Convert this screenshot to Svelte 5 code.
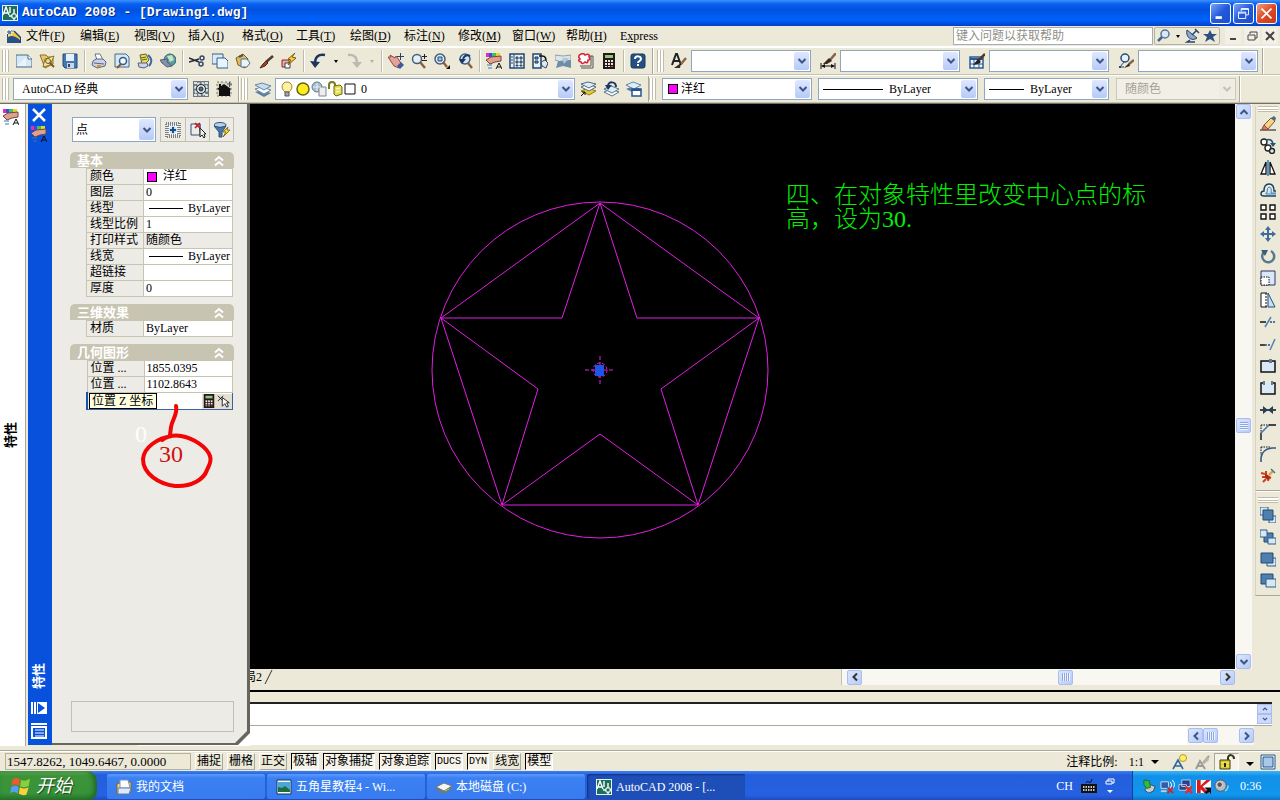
<script>
  const icons = {
    cad: '<path d="M0 0h16v16H0z" fill="#e8f4ee"/><path d="M1 1h14v14H1z" fill="#1c6f5c"/><path d="M1 10L4 2l3 8M2 8h4M8 2v6M12 4v11M7 11h8" stroke="#fff" stroke-width="1.4" fill="none"/><path d="M10 9h4v4h-4z" fill="#1c6f5c" stroke="#fff"/>',
    doc: '<path d="M2 2l8 1 6 6v6H2z" fill="#1e3f7c"/><path d="M4 3l5 1 6 6v3H2z" fill="#f7c936"/><path d="M2 10q5-5 13 2v3H2z" fill="#274f8c"/><path d="M0 4h9M4 0v8M1 1l6 6M7 1L1 7" stroke="#fff"/><path d="M3 3h3v3H3z" fill="#4b83c4"/>',
    newfile: '<path d="M0 2h12l4 4v8H0z" fill="#d5e8f5" stroke="#4d6c86"/><path d="M12 2v4h4" fill="#fff" stroke="#4d6c86"/><path d="M1 13l9-9v9z" fill="#fff" opacity=".5"/>',
    open: '<path d="M1 2h6l2 2h5v7l-8 4z" fill="#e7c56a" stroke="#8d722c"/><path d="M4 14l2-8 9-3-4 9z" fill="#fae9a5" stroke="#8d722c"/><path d="M10 9l5 5" stroke="#775919" stroke-width="2"/><circle cx="9" cy="8" r="2.5" fill="#e9dcae" stroke="#775919"/>',
    save: '<path d="M1 1h14v14H3l-2-2z" fill="#4676b3" stroke="#254878"/><path d="M4 1h8v7H4z" fill="#e5f0fa"/><path d="M5 10h7v5H5z" fill="#c5d6e8"/><path d="M6 11h2v3H6z" fill="#254878"/>',
    print: '<path d="M4 1h5l3 6H6z" fill="#fff" stroke="#65739a"/><path d="M2 8l3-2h7l3 3-1 4-8 2-5-3z" fill="#cbd2e7" stroke="#596588"/><path d="M3 10l10 1" stroke="#596588"/><path d="M6 13h4" stroke="#d99722" stroke-width="2"/>',
    preview: '<path d="M1 1h11l3 3v10H1z" fill="#d6e8f6" stroke="#456b91"/><circle cx="9" cy="8" r="3.5" fill="#f7fbff" stroke="#345a86" stroke-width="1.5"/><path d="M7 11l-4 4" stroke="#8a5530" stroke-width="2"/>',
    publish: '<path d="M3 2l6-1 3 6-4 4H5z" fill="#efd85a" stroke="#636327"/><path d="M1 10h9l1 3-4 2-5-1z" fill="#ccd4e8" stroke="#556083"/><path d="M4 5l5-1M5 7l5-1" stroke="#586429"/><path d="M11 2q6 5 1 11" stroke="#3c6ba5" stroke-width="2" fill="none"/>',
    dwf: '<circle cx="10" cy="7" r="6" fill="#5a9ca4" stroke="#385f78"/><path d="M7 3l5-1 2 5-4 2z" fill="#c9e5bc"/><path d="M0 7l8-1-1 3 5 4-5 1-5-4z" fill="#888fa8" stroke="#555f7c"/>',
    cut: '<path d="M0 5l10 4M0 9l10-3" stroke="#222b40" stroke-width="1.4"/><circle cx="13" cy="5" r="2" fill="none" stroke="#34486c" stroke-width="1.5"/><circle cx="12" cy="11" r="2" fill="none" stroke="#34486c" stroke-width="1.5"/>',
    copy: '<path d="M0 1h11v10H0z" fill="#dbeaf7" stroke="#375e85"/><path d="M5 5h8l3 3v7H5z" fill="#e8f4ff" stroke="#375e85"/>',
    paste: '<path d="M1 5l7-4 5 5-3 9-7-3z" fill="#dfbd5d" stroke="#785f29"/><path d="M6 6h6l3 4-3 4H6z" fill="#eaf3fa" stroke="#57718b"/><path d="M4 4l4-2" stroke="#555" stroke-width="2"/>',
    brush: '<path d="M15 3l-7 6" stroke="#513a2c" stroke-width="2.5"/><path d="M8 8l2 2-3 3-5 2 3-4z" fill="#a64122" stroke="#4c2519"/>',
    block: '<path d="M1 7h7v7H1z" fill="#f0a9a0" stroke="#8d2921"/><path d="M4 10h5v5H4z" fill="#fff" stroke="#345"/><path d="M14 0L7 6l3 1-3 5 8-7-4-1z" fill="#ffcf2e" stroke="#7a5a11"/>',
    undo: '<path d="M15 2C8 1 5 4 5 11" stroke="#1c355c" stroke-width="2.4" fill="none"/><path d="M0 8l10 1-5 6z" fill="#1c355c"/>',
    redo: '<path d="M2 2c7-1 9 3 9 9" stroke="#babab0" stroke-width="2.4" fill="none"/><path d="M6 9h10l-5 6z" fill="#babab0"/>',
    pan: '<path d="M0 4l3 0-1-2 5 3 1-2 3 4 3 5-3 3-5-2z" fill="#e6a199" stroke="#8b4843"/><path d="M9 13l4-4 3 3-4 4z" fill="#3a5c99"/><path d="M12.500 0v7M9 3.500h7" stroke="#27436c"/>',
    zoomrt: '<circle cx="6" cy="6" r="4.5" fill="#e3eff8" stroke="#455d7b" stroke-width="1.5"/><path d="M9 9l5 6" stroke="#8d5d3c" stroke-width="2.4"/><path d="M11 3.500h5M13.500 1v5M11 7.500h5" stroke="#222"/>',
    zoomwin: '<circle cx="6" cy="6" r="5" fill="#e3eff8" stroke="#455d7b" stroke-width="1.5"/><path d="M4 4h4v4H4z" fill="#8fc4ed" stroke="#244a75"/><path d="M9 9l4 5" stroke="#8d5d3c" stroke-width="2.4"/><path d="M16 12v4h-4z" fill="#111"/>',
    zoomprev: '<circle cx="8" cy="6" r="5" fill="#d2e5f3" stroke="#455d7b" stroke-width="1.5"/><path d="M11 10l4 5" stroke="#8d5d3c" stroke-width="2.4"/><path d="M13 3c-4-2-7 1-7 4" stroke="#1b3968" stroke-width="2" fill="none"/><path d="M2 6h7l-4 5z" fill="#1b3968"/>',
    props: '<path d="M0 0h3v4H0z" fill="#e929bd"/><path d="M3 0h3v4H3z" fill="#3b49e9"/><path d="M6 0h4v4H6z" fill="#42c05a"/><path d="M10 0h4v4h-4z" fill="#e9d32e"/><path d="M0 7l5-3 10-1v5l-6 1-5 2z" fill="#dfa090" stroke="#70453f"/><path d="M1 12h5M2 15h4" stroke="#3878ad"/><path d="M10 16l3-6 3 6M11 14h4" stroke="#111" fill="none"/>',
    center: '<path d="M1 1h14v14H1z" fill="#e7f1fa" stroke="#22466f" stroke-width="1.500"/><path d="M5 1v14" stroke="#22466f"/><path d="M7 4h2v2H7zM11 4h2v2h-2zM7 8h2v2H7zM11 8h2v2h-2zM7 12h2v1H7zM11 12h2v1h-2zM2 4h2M2 7h2M2 10h2" fill="#75a9d0" stroke="#345"/>',
    palette: '<path d="M1 1h8v14H1z" fill="#e7f1fa" stroke="#22466f" stroke-width="1.500"/><path d="M3 4h3v2H3zM3 8h3v2H3z" fill="#75a9d0" stroke="#234"/><path d="M7 3h3c4 0 4 3 4 6" fill="none" stroke="#111" stroke-width="1.500"/><path d="M9 9l4-2 3 3-2 5-4-2z" fill="#dce9f2" stroke="#345"/>',
    sheet: '<path d="M0 2l8 1 8-1v5l-7 3-9-3z" fill="#dce4e8" stroke="#8ba0ad"/><path d="M3 8l13-1v8l-8-2-7 2z" fill="#6b8fab"/><path d="M7 5h7l-5 6z" fill="#b8c7cf"/>',
    markup: '<path d="M8 3h7v12H3" fill="none" stroke="#555"/><path d="M13 3v10H2" fill="none" stroke="#555"/><path d="M3 1q3-1 4 1 5-2 4 2 2 3-1 3 0 4-3 2-3 3-4 0-4-1-1-3-3-3 1-5z" fill="#fff" stroke="#d6253a" stroke-width="1.600"/>',
    calc: '<path d="M2 0h12v16H2z" fill="#221a1a"/><path d="M4 2h8v3H4z" fill="#90c77a"/><path d="M4 7h2v2H4zM7 7h2v2H7zM10 7h2v2h-2zM4 10h2v2H4zM7 10h2v2H7zM10 10h2v2h-2zM4 13h2v1H4zM7 13h2v1H7z" fill="#f5dede"/><path d="M10 13h2v1h-2z" fill="#e33"/>',
    help: '<rect x="1" y="1" width="14" height="14" rx="2" fill="#235080" stroke="#173858"/><path d="M5 6c0-4 6-3 6 0 0 2-3 2-3 4" stroke="#fff" stroke-width="2" fill="none"/><path d="M7 11h2v2H7z" fill="#fff"/>',
    textstyle: '<path d="M1 12L5 1h1l4 11M3 8h5" stroke="#222" stroke-width="2" fill="none"/><path d="M15 5l-5 6" stroke="#8a6544" stroke-width="2.500"/><path d="M10 10l-1 5-6 0z" fill="#37291f"/>',
    dimstyle: '<path d="M16 0l-6 7" stroke="#8a6544" stroke-width="2.500"/><path d="M9 5l3 3-5 3-4 0z" fill="#37291f"/><path d="M1 10v6M15 10v6M2 13h12" stroke="#111"/><path d="M1 13l4-2v4zM15 13l-4-2v4z" fill="#111"/>',
    tablestyle: '<path d="M1 4h13v11H1z" fill="#edf5fb" stroke="#2d5c92" stroke-width="1.500"/><path d="M1 5h13v2H1z" fill="#2d5c92"/><path d="M1 11h13M5 6v9M10 6v9" stroke="#2d5c92"/><path d="M16 1L9 8" stroke="#513a2c" stroke-width="2.500"/><path d="M9 6l3 3-3 2-5 1z" fill="#222"/>',
    leader: '<circle cx="7" cy="5" r="4" fill="#e9f2fa" stroke="#254a75" stroke-width="1.500"/><path d="M6 9l-4 5h4" stroke="#254a75" fill="none"/><path d="M1 13h2v2H1z" fill="#254a75"/><path d="M16 7l-5 4" stroke="#8a6544" stroke-width="2.500"/><path d="M11 10l1 3-6 2z" fill="#37291f"/>',
    gear: '<path d="M0 0h16v16H0z" fill="#6d7880"/><path d="M1 1h3v2H1zM12 1h3v2h-3zM1 13h3v2H1zM12 13h3v2h-3z" fill="#dde2e4"/><circle cx="8" cy="8" r="6" fill="none" stroke="#dce4e8" stroke-width="2" stroke-dasharray="2.700 2"/><circle cx="8" cy="8" r="4.500" fill="#dce4e8" stroke="#222b33"/><circle cx="8" cy="8" r="2" fill="#5e6a72" stroke="#222b33"/>',
    home: '<path d="M1 1h14v14H1z" fill="#d9d5c5" stroke="#777" stroke-dasharray="2 2"/><path d="M1 8l7-5 7 5-1 1v6H3V9z" fill="#111"/><path d="M3 3h2v4H3z" fill="#111"/><path d="M11 3h5M13.500 1v5" stroke="#555"/>',
    layers: '<path d="M0 11l7-2 9 3-7 4z" fill="#5f7f9f"/><path d="M0 8l7-2 9 3-7 4z" fill="#fff" stroke="#6687a8"/><path d="M0 4l7-2 9 3-7 4z" fill="#c8dcec" stroke="#6687a8"/>',
    bulb: '<path d="M6 11C1 7 3 1 8 1s7 6 2 10z" fill="#fff1a2" stroke="#9b832c"/><path d="M6 11h4v4H6z" fill="#aaa" stroke="#555"/>',
    sun: '<circle cx="8" cy="8" r="6" fill="#ffec21" stroke="#626517" stroke-width="1.500"/>',
    vpfreeze: '<circle cx="6" cy="6" r="5" fill="#a7bfc9" stroke="#617d8a"/><path d="M8 6h7v9H8z" fill="#eee" stroke="#7b888f"/><path d="M6 2v8M2 6h8" stroke="#eef"/>',
    unlock: '<path d="M2 8V4c0-4 6-4 6 0v3" fill="none" stroke="#7c791f" stroke-width="2"/><path d="M7 5l6-1 2 2v7l-6 2-2-2z" fill="#e6df4c" stroke="#68671b"/><path d="M9 8l4-1M9 11l4-1" stroke="#fff"/>',
    square: '<path d="M2 3h10v10H2z" fill="#fff" stroke="#111"/>',
    laycur: '<path d="M1 10l7-3 8 3-7 4z" fill="#e6c92d" stroke="#8b7a20"/><path d="M1 6l7-3 8 3-7 4z" fill="#fff" stroke="#4e6b7f"/><path d="M1 3l7-2 8 2-7 4z" fill="#e1edf5" stroke="#4e6b7f"/><path d="M1 15l4-4M2 11h3v3" stroke="#111" fill="none"/>',
    layprev: '<path d="M1 11l7-3 8 3-7 4z" fill="#fff" stroke="#55758f"/><path d="M1 8l7-3 8 3-7 4z" fill="#e1edf5" stroke="#55758f"/><path d="M13 6c0-6-8-6-8-1" fill="none" stroke="#1c3965" stroke-width="2"/><path d="M2 4h7l-4 5z" fill="#1c3965"/>',
    laystate: '<path d="M0 8l7-3 8 3-7 4z" fill="#5f7f9f"/><path d="M0 4l7-3 8 3-7 4z" fill="#e1edf5" stroke="#6687a8"/><path d="M6 8h9v7H6z" fill="#fff" stroke="#275492" stroke-width="1.500"/><path d="M6 8h9v2H6z" fill="#275492"/>',
    search: '<circle cx="9" cy="6" r="4" fill="#d7e8f8" stroke="#5b7396" stroke-width="1.500"/><path d="M6 9l-4 4" stroke="#43618b" stroke-width="2.500"/>',
    dish: '<path d="M3 2l10 8c-5 4-12-1-10-8z" fill="#8daac8" stroke="#274570"/><path d="M6 12l-3 2h8M8 7l4-4M11 1l4 4" stroke="#274570" stroke-width="1.500" fill="none"/>',
    star: '<path d="M8 2l2 4h5l-4 3 2 5-5-3-5 3 2-5-4-3h5z" fill="#2d4f80"/>',
    quicksel: '<path d="M1 1h14v14H1z" fill="none" stroke="#111" stroke-dasharray="1 1"/><path d="M3 3h10v10H3z" fill="#fff" stroke="#111" stroke-dasharray="1 1"/><circle cx="8" cy="8" r="4" fill="#cce3f7"/><path d="M8 5v6M5 8h6" stroke="#174b8b" stroke-width="2"/>',
    selobj: '<path d="M1 2h9v11H1zM10 2v7" fill="none" stroke="#30507a"/><path d="M5 1l5 5M10 1L5 6" stroke="#c01820" stroke-width="1.500"/><path d="M10 6v9l2-2 2 3 1-1-1-3h2z" fill="#e4f2e8" stroke="#222"/>',
    filter: '<ellipse cx="6" cy="3" rx="6" ry="2.500" fill="#b8d0e8" stroke="#31527d"/><path d="M0 4l5 6v5h3v-5l4-6q-6 3-12 0z" fill="#4a76a6" stroke="#31527d"/><path d="M14 5l-5 5 3 0-3 5 7-7h-3z" fill="#ffd73b" stroke="#8f7518"/>',
    pick: '<path d="M1 2l6 6M7 2L1 8" stroke="#111"/><path d="M6 4v10l3-3 2 4 2-1-2-4h3z" fill="#fff" stroke="#111"/>',
    erase: '<path d="M0 14h16" stroke="#111"/><path d="M4 9l7-7 4 3-7 8z" fill="#f5d489" stroke="#76572c"/><path d="M4 9l4 4-2 1-4-1z" fill="#e5766d" stroke="#8c4a44"/><path d="M11 2l4 3 1-3-2-2z" fill="#456b8c"/>',
    copyobj: '<circle cx="4" cy="4" r="3" fill="#fff" stroke="#222" stroke-width="1.400"/><circle cx="8" cy="10" r="3" fill="#fff" stroke="#222" stroke-width="1.400"/><circle cx="12" cy="13" r="2.500" fill="#dce8f2" stroke="#222" stroke-width="1.400"/><path d="M6 2q6-2 7 4" stroke="#1f5280" stroke-width="1.600" fill="none"/><path d="M10 5h6l-3 4z" fill="#1f5280"/>',
    mirror: '<path d="M6 2v12H1zM10 2v12h5z" fill="#fff" stroke="#111" stroke-width="1.300"/><path d="M8 0v16" stroke="#267bb9" stroke-width="1.500"/>',
    offset: '<path d="M16 14H4q-3 0-3-2 0-3 3-3 0-7 5-7t5 7h2" fill="none" stroke="#1d3f60" stroke-width="1.400"/><path d="M16 12H6q-1-1 1-1 0-6 2-6 3 0 2 6h5" fill="#d5eaf8" stroke="#3a83bb"/>',
    array: '<path d="M1 1h5v5H1zM10 1h5v5h-5zM1 10h5v5H1zM10 10h5v5h-5z" fill="#fff" stroke="#111" stroke-width="1.400"/>',
    move: '<path d="M8 0l3 4H9v3h3V5l4 3-4 3V9H9v3h2l-3 4-3-4h2V9H4v2L0 8l4-3v2h3V4H5z" fill="#3f6c9b"/>',
    rotate: '<path d="M11 3a6 6 0 1 1-7 1" stroke="#58788e" stroke-width="2.500" fill="none"/><path d="M1 2h7L5 8z" fill="#365e7e"/>',
    scale: '<path d="M1 1h14v14H1z" fill="#d7e8f9" stroke="#336"/><path d="M1 7h8v8H1z" fill="#fff" stroke="#111" stroke-dasharray="1.500 1"/>',
    stretch: '<path d="M7 1H1v14h6" fill="#fff" stroke="#111"/><path d="M6 1v14" stroke="#111" stroke-dasharray="2 1"/><path d="M8 1l7 14H8z" fill="#c8dff2" stroke="#234f7b"/>',
    trim: '<path d="M0 8h6" stroke="#111" stroke-width="1.500"/><path d="M10 8h6" stroke="#234f7b" stroke-width="1.500" stroke-dasharray="2 1"/><path d="M5 13l6-10" stroke="#4c85b5" stroke-width="1.500"/>',
    extend: '<path d="M0 9h5" stroke="#111" stroke-width="1.500"/><path d="M5 9h6" stroke="#234f7b" stroke-width="1.500" stroke-dasharray="2 1"/><path d="M10 14l5-11" stroke="#4c85b5" stroke-width="1.500"/>',
    breakpt: '<path d="M1 3h14v11H1z" fill="#dbe9f6" stroke="#111" stroke-width="1.500"/><path d="M9 1h3v4H9z" fill="#5c7c9c"/>',
    breakln: '<path d="M4 3H1v11h14V3h-3" fill="#dbe9f6" stroke="#111" stroke-width="1.500"/><path d="M3 1h2v4H3zM11 1h2v4h-2z" fill="#5c7c9c"/>',
    join: '<path d="M0 8h16" stroke="#111" stroke-width="1.500"/><path d="M3 4l5 4-5 4zM13 4L8 8l5 4z" fill="#243f59"/>',
    chamfer: '<path d="M1 1h10M1 1v8" stroke="#111" stroke-dasharray="1.500 1"/><path d="M1 16V9M9 1h7" stroke="#111" stroke-width="1.400"/><path d="M1 9l8-8" stroke="#3d79b3" stroke-width="1.600"/>',
    fillet: '<path d="M1 1h10M1 1v8" stroke="#111" stroke-dasharray="1.500 1"/><path d="M1 16v-4Q2 3 12 2h4" stroke="#315b86" stroke-width="1.600" fill="none"/>',
    explode: '<path d="M1 5l4 1M6 3v4M2 9l3 0M3 14l3-3M8 13l1-3M11 10l-2-1" stroke="#cf3f22" stroke-width="2"/><path d="M5 6l3 1 2 2-2 3-3-2z" fill="#a82d18"/><path d="M9 7l4-4" stroke="#dbab37" stroke-width="2.500"/><path d="M11 1l4 4" stroke="#4a7199" stroke-width="1.500"/>',
    front: '<path d="M0 0h8v8H0zM9 9h7v7H9z" fill="#d7e8f5" stroke="#315b86"/><path d="M3 3h10v10H3z" fill="#4d80ae" stroke="#254b73"/>',
    back: '<path d="M4 4h9v9H4z" fill="#4d80ae" stroke="#254b73"/><path d="M0 1h7v7H0zM8 9h8v6H8z" fill="#d7e8f5" stroke="#315b86"/>',
    above: '<path d="M7 7h9v8H7z" fill="#d7e8f5" stroke="#315b86"/><path d="M1 2h12v10H1z" fill="#4d80ae" stroke="#254b73"/>',
    under: '<path d="M1 1h12v10H1z" fill="#4d80ae" stroke="#254b73"/><path d="M6 6h10v8H6z" fill="#d7e8f5" stroke="#315b86"/>',
    autohide: '<path d="M1 2v12M4 2v12" stroke="#fff" stroke-width="2"/><path d="M6 2h10v12H6z" fill="#fff"/><path d="M7 3l7 5-7 5z" fill="#0851dc"/>',
    menu: '<path d="M0 1h16" stroke="#fff" stroke-width="2"/><path d="M1 4h14v11H1z" fill="#0851dc" stroke="#fff" stroke-width="2"/><path d="M4 7h9M4 10h9M4 13h9" stroke="#fff"/>',
    folder: '<path d="M1 5l5-2h9v10l-4 2H1z" fill="#f6d777" stroke="#806626"/><path d="M4 1h8l2 8H4z" fill="#fff" stroke="#719abd"/><path d="M2 9h13l-2 6H2z" fill="#dce9ff" stroke="#6482ad"/>',
    picture: '<path d="M1 1h14v14H1z" fill="#f5fbff" stroke="#13385c"/><path d="M2 3h12v10H2z" fill="#4aa7da"/><path d="M2 13V8l4 1 3-2 5 4v2z" fill="#1e6d3a"/>',
    disk: '<path d="M0 8l8-4 8 3-8 5z" fill="#f6f6f6" stroke="#777"/><path d="M0 8l8 4 8-5v3l-8 5-8-4z" fill="#727880"/><path d="M9 12l4-2" stroke="#7be36a"/>',
    annoauto: '<path d="M1 15l5-9 5 9M3 12h7" stroke="#31669a" stroke-width="1.600" fill="none"/><circle cx="11" cy="4" r="3.500" fill="#fff06b" stroke="#b59a23"/>',
    annogrey: '<path d="M1 15l4-8 5 8M3 12h6M8 9l6-7" stroke="#9d9d98" stroke-width="2" fill="none"/><path d="M8 7l5-4 1 3-5 4z" fill="#b5b5b0"/>',
    lock: '<path d="M9 7V4c0-4 6-4 6 1" fill="none" stroke="#333214" stroke-width="2"/><path d="M1 6h10v9H1z" fill="#d9cc25" stroke="#423f0e"/><path d="M2 9h8M2 12h8" stroke="#fff37a"/><path d="M5 9h2v4H5z" fill="#222"/>',
    clean: '<path d="M1 1h14v14H1z" fill="#f4f9ff" stroke="#25568b"/><path d="M3 3h10v10H3z" fill="#a8c8e8" stroke="#25568b"/>',
    keyboard: '<path d="M5 5q1-3 3-1t3-3" stroke="#111" fill="none"/><path d="M0 6h16v9H0z" fill="#111"/><path d="M2 9h12M2 12h12" stroke="#fff" stroke-width="1.500" stroke-dasharray="1.500 1"/>',
    safely: '<path d="M5 8l4-2 5 2-2 5-5 2-4-3z" fill="#c5ccd2" stroke="#3d4d56"/><path d="M2 1l6 1 1 7-4 1-3-4z" fill="#35b742" stroke="#1b6f2c"/>',
    wifi: '<path d="M1 3h8v7H1z" fill="#285db0" stroke="#ddd"/><path d="M11 3q3 3 0 7M13 1q5 5 0 10" stroke="#fff" fill="none"/><path d="M8 9l6 6M14 9l-6 6" stroke="#d82222" stroke-width="2"/><path d="M1 13h6" stroke="#ccc" stroke-width="2"/>',
    lan: '<path d="M4 1h9v7H4zM1 6h8v6H1z" fill="#23458f" stroke="#c7cce0"/><path d="M8 8l7 7M15 8l-7 7" stroke="#e52b2b" stroke-width="2.500"/>',
    shield: '<path d="M0 1h16v14H0z" fill="#fff"/><path d="M1 1h4v6l6-6h5L7 8l7 7H9L5 11v4H1z" fill="#d91c1c"/><path d="M9 9h7v7l-2-2-3 2-2-2 3-2z" fill="#111"/>',
    volume: '<circle cx="7" cy="7" r="6" fill="#b9bdc2" stroke="#555b64"/><circle cx="6" cy="6" r="3" fill="#51565e" stroke="#eee"/><path d="M12 13q3-2 3-6" stroke="#8cd0ff" stroke-width="1.500" fill="none"/>',
    flag: '<path d="M2 3q3-3 6 0L7 8Q4 5 1 8z" fill="#f0592b"/><path d="M9 3q3 2 7-1l-1 6q-4 2-7 0z" fill="#8bd03c"/><path d="M1 9q3-3 6 0l-1 5q-3-3-6 0z" fill="#5b9df5"/><path d="M8 9q3 2 7 0l-2 6q-3 1-6-1z" fill="#fdd13a"/>'
  }

  const menus = [
    ['文件', 'F'], ['编辑', 'E'], ['视图', 'V'], ['插入', 'I'], ['格式', 'O'], ['工具', 'T'],
    ['绘图', 'D'], ['标注', 'N'], ['修改', 'M'], ['窗口', 'W'], ['帮助', 'H']
  ]

  const standard = [
    'newfile', 'open', 'save', '|', 'print', 'preview', 'publish', 'dwf', '|',
    'cut', 'copy', 'paste', 'brush', 'block', '|', 'undo', 'v', 'redo', 'voff', '|',
    'pan', 'zoomrt', 'zoomwin', 'zoomprev', '|',
    'props', 'center', 'palette', 'sheet', 'markup', 'calc', '|', 'help'
  ]

  const styles = [
    { icon: 'textstyle', label: '文字样式' },
    { icon: 'dimstyle', label: '标注样式' },
    { icon: 'tablestyle', label: '表格样式' },
    { icon: 'leader', label: '多重引线样式' }
  ]

  const modify = [
    'erase', 'copyobj', 'mirror', 'offset', 'array', 'move', 'rotate', 'scale', 'stretch',
    'trim', 'extend', 'breakpt', 'breakln', 'join', 'chamfer', 'fillet', 'explode'
  ]
  const order = ['front', 'back', 'above', 'under']

  const groups = [
    {
      title: '基本',
      rows: [
        { label: '颜色', value: '洋红', kind: 'color' },
        { label: '图层', value: '0' },
        { label: '线型', value: 'ByLayer', kind: 'line' },
        { label: '线型比例', value: '1' },
        { label: '打印样式', value: '随颜色', kind: 'readonly' },
        { label: '线宽', value: 'ByLayer', kind: 'line' },
        { label: '超链接', value: '' },
        { label: '厚度', value: '0' }
      ]
    },
    { title: '三维效果', rows: [{ label: '材质', value: 'ByLayer' }] },
    {
      title: '几何图形',
      rows: [
        { label: '位置 ...', value: '1855.0395' },
        { label: '位置 ...', value: '1102.8643' },
        { label: '位置 Z 坐标', value: '', kind: 'active' }
      ]
    }
  ]

  let toggles = $state([
    { label: '捕捉', on: false },
    { label: '栅格', on: false },
    { label: '正交', on: false },
    { label: '极轴', on: true },
    { label: '对象捕捉', on: true },
    { label: '对象追踪', on: true },
    { label: 'DUCS', on: true, narrow: true },
    { label: 'DYN', on: true, narrow: true },
    { label: '线宽', on: false },
    { label: '模型', on: true }
  ])

  const tasks = [
    { icon: 'folder', label: '我的文档' },
    { icon: 'picture', label: '五角星教程4 - Wi...' },
    { icon: 'disk', label: '本地磁盘 (C:)' },
    { icon: 'cad', label: 'AutoCAD 2008 - [...', active: true }
  ]

  const tray = ['safely', 'wifi', 'lan', 'shield', 'volume']
</script>

{#snippet icon(name)}
  <svg class="icon" viewBox="0 0 16 16" aria-hidden="true">{@html icons[name]}</svg>
{/snippet}

{#snippet tool(name)}
  <button class="tool" aria-label={name}>{@render icon(name)}</button>
{/snippet}

{#snippet chevron(dir)}
  <svg class="chevron chevron--{dir}" viewBox="0 0 10 10" aria-hidden="true"><path d="M1.500 3L5 6.500 8.500 3" /></svg>
{/snippet}

{#snippet combo(label, value, cls, kind)}
  <span class="combo {cls}" class:combo--off={kind === 'off'}>
    <select class="combo__select combo__select--{kind}" aria-label={label} disabled={kind === 'off'}>
      <option>{value}</option>
    </select>
    {#if kind === 'color'}<i class="swatch"></i>{/if}
    {#if kind === 'line'}<i class="combo__line"></i>{/if}
    {#if kind === 'layer'}
      <span class="combo__layer">
        {#each ['bulb', 'sun', 'vpfreeze', 'unlock', 'square'] as name}{@render icon(name)}{/each}
      </span>
    {/if}
    <span class="combo__arrow">{@render chevron('down')}</span>
  </span>
{/snippet}

<div class="desktop">
  <header class="title">
    {@render icon('cad')}
    <h1>AutoCAD 2008 - [Drawing1.dwg]</h1>
    <button class="title__btn" aria-label="最小化"><svg viewBox="0 0 21 21"><path d="M5 15h7" stroke-width="3" /></svg></button>
    <button class="title__btn" aria-label="还原"><svg viewBox="0 0 21 21"><path d="M8 8V5h8v7h-3M5 9h8v7H5zM5 10h8M8 6h8" /></svg></button>
    <button class="title__btn title__btn--close" aria-label="关闭"><svg viewBox="0 0 21 21"><path d="M5 5l11 11M16 5L5 16" stroke-width="2" /></svg></button>
  </header>

  <nav class="menu">
    {@render icon('doc')}
    {#each menus as [name, key]}
      <button class="menu__item">{name}(<u>{key}</u>)</button>
    {/each}
    <button class="menu__item">E<u>x</u>press</button>
    <input class="menu__search" aria-label="帮助" placeholder="键入问题以获取帮助" />
    <div class="menu__tools">
      {@render tool('search')}
      <span class="caret"></span>
      {@render tool('dish')}
      {@render tool('star')}
    </div>
    <div class="menu__window">
      <button aria-label="最小化文档"><svg viewBox="0 0 12 12"><path d="M3 9h6" stroke-width="2" /></svg></button>
      <button aria-label="还原文档"><svg viewBox="0 0 12 12"><path d="M4 4V2h7v6H9M2 5h7v5H2z" /></svg></button>
      <button aria-label="关闭文档"><svg viewBox="0 0 12 12"><path d="M2 2l8 8M10 2l-8 8" stroke-width="2" /></svg></button>
    </div>
  </nav>

  <div class="bars bars--top">
    <div class="bar">
      <i class="grip"></i>
      {#each standard as name}
        {#if name === '|'}
          <i class="sep"></i>
        {:else if name === 'v' || name === 'voff'}
          <button class="drop" aria-label="更多"><span class="caret" class:caret--off={name === 'voff'}></span></button>
        {:else}
          {@render tool(name)}
        {/if}
      {/each}
    </div>
    <div class="bar bar--styles">
      <i class="grip"></i>
      {#each styles as s}
        <div class="style">
          {@render icon(s.icon)}
          {@render combo(s.label, '', 'combo--style', 'plain')}
        </div>
      {/each}
    </div>
  </div>

  <div class="bars">
    <div class="bar">
      <i class="grip"></i>
      {@render combo('工作空间', 'AutoCAD 经典', 'combo--space', 'plain')}
      {@render tool('gear')}
      {@render tool('home')}
    </div>
    <div class="bar">
      <i class="grip"></i>
      {@render tool('layers')}
      {@render combo('图层', '0', 'combo--layers', 'layer')}
      {@render tool('laycur')}
      {@render tool('layprev')}
      {@render tool('laystate')}
    </div>
    <div class="bar bar--props">
      <i class="grip"></i>
      {@render combo('颜色', '洋红', 'combo--color', 'color')}
      {@render combo('线型', 'ByLayer', 'combo--ltype', 'line')}
      {@render combo('线宽', 'ByLayer', 'combo--lweight', 'line')}
      {@render combo('打印样式', '随颜色', 'combo--style', 'off')}
    </div>
  </div>

  <main class="body">
    <aside class="dock">
      {@render icon('props')}
      <span class="upright">特性</span>
    </aside>

    <section class="palette">
      <div class="palette__bar">
        <button aria-label="关闭特性"><svg class="icon" viewBox="0 0 16 16"><path d="M2 2l12 12M14 2L2 14" stroke="#fff" stroke-width="2.500" /></svg></button>
        {@render icon('props')}
        <span class="upright">特性</span>
        <button aria-label="自动隐藏">{@render icon('autohide')}</button>
        <button aria-label="特性菜单">{@render icon('menu')}</button>
      </div>
      <div class="palette__edge">
        <div class="palette__body">
          <div class="palette__top">
            {@render combo('对象', '点', 'combo--object', 'plain')}
            <div class="palette__tools">
              {@render tool('quicksel')}
              {@render tool('selobj')}
              {@render tool('filter')}
            </div>
          </div>

          {#each groups as group}
            <div class="group">
              <h2>
                {group.title}
                <svg viewBox="0 0 10 12"><path d="M1 5.500L5 2l4 3.500M1 10.500L5 7l4 3.500" /></svg>
              </h2>
              <table>
                <tbody>
                  {#each group.rows as row}
                    <tr class:active={row.kind === 'active'}>
                      <th scope="row"><span class:tip={row.kind === 'active'}>{row.label}</span></th>
                      <td class:readonly={row.kind === 'readonly'}>
                        <div class="cell">
                          {#if row.kind === 'color'}<i class="swatch"></i>{/if}
                          {#if row.kind === 'line'}<i class="cell__line"></i>{/if}
                          {#if row.kind}
                            <span>{row.value}</span>
                          {:else}
                            <input aria-label={row.label} value={row.value} />
                          {/if}
                          {#if row.kind === 'active'}
                            <button class="cell__btn" aria-label="计算器">{@render icon('calc')}</button>
                            <button class="cell__btn" aria-label="拾取点">{@render icon('pick')}</button>
                          {/if}
                        </div>
                      </td>
                    </tr>
                  {/each}
                </tbody>
              </table>
            </div>
          {/each}

          <div class="palette__hint"></div>
        </div>
      </div>

      <svg class="note" width="90" height="110" viewBox="130 385 90 110">
        <text x="135" y="442" fill="#fff">0</text>
        <path d="M176 406c2 8-4 14-5 21l-1 8" />
        <path d="M172 436c-14 2-28 11-29 23 0 15 16 25 32 27 17 1 29-7 32-16 2-5 5-8 3-14-3-9-17-18-29-20-6-1-13 0-19 4" />
        <text x="159" y="462" fill="#d01010">30</text>
      </svg>
    </section>

    <div class="work">
      <div class="work__top">
        <div class="view">
          <div class="view__row">
            <div class="canvas">
              <svg width="985" height="565" viewBox="250 104 985 565">
                <g class="canvas__lines">
                  <circle cx="600" cy="370" r="168" />
                  <path d="M600 203L759 318 698 505H502L441 318z" />
                  <path d="M600 203L637 318H759L661 389 698 505 600 434 502 505 538 389 441 318H562z" />
                  <path d="M585 370h30M600 356v30" stroke-dasharray="4 2" />
                  <circle cx="600" cy="370" r="7" stroke-dasharray="3 2" />
                </g>
                <path d="M595 365h9v11h-9z" fill="#1c55e8" />
                <text x="786" y="203">四、在对象特性里改变中心点的标</text>
                <text x="786" y="227">高，设为30.</text>
              </svg>
            </div>
            <div class="scroll scroll--v">
              <button aria-label="向上">{@render chevron('up')}</button>
              <i class="before"></i>
              <span class="thumb"></span>
              <i class="after"></i>
              <button aria-label="向下">{@render chevron('down')}</button>
            </div>
          </div>
          <div class="tabs">
            <a class="tabs__tab" href="#layout2">局2</a>
            <svg width="12" height="16" viewBox="0 0 12 16"><path d="M3 15L10 1" /></svg>
            <div class="scroll scroll--h">
              <button aria-label="向左">{@render chevron('left')}</button>
              <i class="before"></i>
              <span class="thumb"></span>
              <i class="after"></i>
              <button aria-label="向右">{@render chevron('right')}</button>
            </div>
          </div>
        </div>
        <div class="side">
          <div class="side__bar">
            <i class="grip grip--h"></i>
            {#each modify as name}{@render tool(name)}{/each}
          </div>
          <div class="side__bar">
            <i class="grip grip--h"></i>
            {#each order as name}{@render tool(name)}{/each}
          </div>
        </div>
      </div>

      <div class="command">
        <div class="command__log">
          <div class="command__spin">
            <button aria-label="上一行">{@render chevron('up')}</button>
            <button aria-label="下一行">{@render chevron('down')}</button>
          </div>
        </div>
        <div class="command__line">
          <input aria-label="命令" />
          <div class="scroll scroll--h scroll--cmd">
            <button aria-label="向左">{@render chevron('left')}</button>
            <span class="thumb"></span>
            <i class="after"></i>
            <button aria-label="向右">{@render chevron('right')}</button>
          </div>
        </div>
      </div>
    </div>
  </main>

  <footer class="status">
    <output class="status__pos">1547.8262, 1049.6467, 0.0000</output>
    {#each toggles as t}
      <button class="toggle" class:toggle--on={t.on} class:toggle--narrow={t.narrow} onclick={() => (t.on = !t.on)}>{t.label}</button>
    {/each}
    <span class="status__label">注释比例:</span>
    <button class="status__scale">1:1 <span class="caret caret--big"></span></button>
    {@render tool('annoauto')}
    {@render tool('annogrey')}
    <span class="status__lock">{@render tool('lock')}</span>
    <button class="status__more" aria-label="状态栏菜单"><span class="caret caret--big"></span></button>
    {@render icon('clean')}
  </footer>

  <div class="taskbar">
    <button class="start">{@render icon('flag')}<span>开始</span></button>
    <div class="taskbar__list">
      {#each tasks as task}
        <button class="task" class:task--active={task.active}>{@render icon(task.icon)}<span>{task.label}</span></button>
      {/each}
    </div>
    <div class="lang">
      <span>CH</span>
      {@render icon('keyboard')}
      <svg width="10" height="16" viewBox="0 0 10 16"><path d="M3 3V1h6v4H7M1 3h6v3H1z" fill="none" stroke="#fff" /><path d="M2 12h6l-3 3z" fill="#fff" /></svg>
    </div>
    <div class="tray">
      {#each tray as name}{@render icon(name)}{/each}
      <time>0:36</time>
    </div>
  </div>
</div>

<style>
  :global(body) {
    background: #ece9d8;
  }

  .desktop {
    display: flex;
    flex-direction: column;
    min-height: 100vh;
    overflow: hidden;
    background: #ece9d8;
    color: #000;
    font: 12px/16px 'Liberation Serif', 'Noto Sans CJK SC', serif;
  }

  .desktop * {
    box-sizing: border-box;
  }

  button,
  input,
  select {
    margin: 0;
    padding: 0;
    border: 0;
    border-radius: 0;
    background: none;
    color: inherit;
    font: inherit;
  }

  .icon {
    flex: none;
    display: block;
    width: 16px;
    height: 16px;
  }

  .tool {
    flex: none;
    display: flex;
    align-items: center;
    justify-content: center;
    width: 23px;
    height: 22px;
  }

  .caret {
    display: inline-block;
    border: 2px solid transparent;
    border-top: 3px solid #000;
    border-bottom: 0;
  }

  .caret--off {
    border-top-color: #b5b2a4;
  }

  .caret--big {
    border-width: 4px 4px 0;
  }

  .chevron {
    width: 10px;
    height: 10px;
    fill: none;
    stroke: #3c5584;
    stroke-width: 2;
  }

  .chevron--up {
    transform: rotate(180deg);
  }

  .chevron--left {
    transform: rotate(90deg);
  }

  .chevron--right {
    transform: rotate(-90deg);
  }

  .swatch {
    flex: none;
    width: 10px;
    height: 10px;
    border: 1px solid #000;
    background: #f0f;
  }

  .upright {
    writing-mode: vertical-rl;
    text-orientation: sideways;
    transform: rotate(180deg);
    font-weight: bold;
    font-size: 13px;
  }

  /* title bar */
  .title {
    display: flex;
    align-items: center;
    gap: 2px;
    height: 26px;
    padding: 0 3px 0 2px;
    background: linear-gradient(#3a93ff 0, #0a5fee 4px, #0053e1 10px, #0062fb 20px, #0040c8 26px);
  }

  .title h1 {
    flex: 1;
    margin: 0 0 0 2px;
    color: #fff;
    font: bold 13px/26px 'Liberation Mono', monospace;
    text-shadow: 1px 1px 0 #0a2a80;
  }

  .title__btn {
    width: 21px;
    height: 21px;
    border: 1px solid #fff;
    border-radius: 3px;
    background: linear-gradient(135deg, #7ba4f5, #2459dd 50%, #1c4ecb);
  }

  .title__btn--close {
    background: linear-gradient(135deg, #f0a084, #dd4a25 50%, #c43a17);
  }

  .title__btn svg {
    display: block;
    fill: none;
    stroke: #fff;
  }

  /* menu bar */
  .menu {
    display: flex;
    align-items: center;
    height: 20px;
    padding-left: 5px;
  }

  .menu__item {
    min-width: 54px;
    padding-left: 5px;
    line-height: 18px;
    text-align: left;
  }

  .menu__search {
    width: 200px;
    height: 18px;
    margin-left: auto;
    padding: 0 2px;
    border: 1px solid #a5acb2;
    background: #fff;
  }

  .menu__search::placeholder {
    color: #8f8f88;
    opacity: 1;
  }

  .menu__tools {
    display: flex;
    align-items: center;
    height: 18px;
    width: 66px;
    margin-left: 1px;
    border: 1px solid #b5b19d;
    border-radius: 2px;
  }

  .menu__tools .tool {
    width: 18px;
  }

  .menu__tools .caret {
    margin: 0 3px;
  }

  .menu__window {
    display: flex;
    justify-content: space-between;
    width: 53px;
    margin: 0 2px 0 5px;
  }

  .menu__window button {
    width: 16px;
    height: 16px;
    padding: 2px;
    background: #f2f0e6;
  }

  .menu__window svg {
    display: block;
    fill: none;
    stroke: #444;
  }

  /* toolbars */
  .bars {
    display: flex;
    height: 28px;
    border-top: 1px solid #fff;
    border-bottom: 1px solid #c6c2b0;
  }

  .bars--top {
    height: 29px;
    border-top-width: 2px;
  }

  .bar {
    display: flex;
    align-items: center;
    padding: 0 3px 0 2px;
    border-right: 1px solid #aca899;
    box-shadow: 1px 0 0 #fff;
  }

  .bar--props {
    gap: 6px;
    padding-left: 0;
  }

  .bar--styles {
    padding-left: 4px;
  }

  .grip {
    flex: none;
    display: block;
    width: 7px;
    height: 22px;
    margin-right: 3px;
    border: solid #c0bca9;
    border-width: 0 1px;
    background: linear-gradient(90deg, #fff 2px, #c0bca9 2px 3px, #fff 3px);
  }

  .bar--props .grip {
    margin-right: 0;
  }

  .grip--h {
    width: 20px;
    height: 6px;
    margin: 2px 0 1px 2px;
    border-width: 1px 0;
    background: linear-gradient(#fff 2px, #c0bca9 2px 3px, #fff 3px);
  }

  .sep {
    width: 6px;
    height: 22px;
    border-left: 3px solid transparent;
    background: linear-gradient(90deg, #c0bca9 1px, #fff 1px 2px, transparent 2px);
    background-clip: padding-box;
  }

  .drop {
    display: flex;
    align-items: center;
    justify-content: center;
    width: 13px;
    height: 22px;
  }

  .style {
    display: flex;
    align-items: center;
    gap: 4px;
    margin-left: 4px;
    padding-right: 1px;
  }

  .style + .style {
    padding-left: 4px;
  }

  .combo {
    flex: none;
    display: grid;
    align-items: center;
    height: 22px;
    border: 1px solid #8fa6bf;
    background: #fff;
  }

  .combo > * {
    grid-area: 1 / 1;
  }

  .combo--style { width: 120px; }
  .combo--space { width: 175px; margin: 0 1px; }
  .combo--layers { width: 300px; margin: 0 1px; }
  .combo--color { width: 150px; }
  .combo--ltype { width: 160px; }
  .combo--lweight { width: 125px; margin-right: 1px; }
  .combo--object { width: 84px; height: 25px; }

  .combo__select {
    appearance: none;
    width: 100%;
    height: 20px;
    padding-left: 8px;
    outline: none;
  }

  .combo--object .combo__select {
    padding-left: 3px;
  }

  .combo__select--color {
    padding-left: 18px;
  }

  .combo .swatch {
    margin-left: 5px;
  }

  .combo__select--layer {
    padding-left: 85px;
  }

  .combo__select--line {
    padding-right: 46px;
    text-align: right;
    text-align-last: right;
  }

  .combo--lweight .combo__select--line {
    padding-right: 36px;
  }

  .combo__line {
    width: 60px;
    margin-left: 4px;
    border-top: 1px solid #000;
  }

  .combo--lweight .combo__line {
    width: 35px;
  }

  .combo__layer {
    display: flex;
    margin-left: 3px;
    pointer-events: none;
  }

  .combo__arrow {
    justify-self: end;
    display: flex;
    align-items: center;
    justify-content: center;
    width: 15px;
    height: calc(100% - 2px);
    margin-right: 1px;
    border-radius: 2px;
    background: linear-gradient(#dfe8fe, #b6c9f7);
    pointer-events: none;
  }

  .combo--off {
    border-color: #c9c7ba;
    background: #f1efe6;
    color: #a5a294;
  }

  .combo--off .combo__arrow {
    background: #efede3;
  }

  .combo--off .chevron {
    stroke: #c5c2b4;
  }

  .combo__select:disabled {
    opacity: 1;
    color: #a5a294;
  }

  /* docked strip and properties palette */
  .body {
    flex: 1;
    display: flex;
    padding-bottom: 4px;
    border-top: 1px solid #716f64;
  }

  .dock {
    display: flex;
    flex-direction: column;
    align-items: center;
    width: 26px;
    padding: 5px 3px 0 0;
    border-right: 1px solid #aca899;
    background: #fff;
  }

  .dock .upright {
    margin: auto 0;
  }

  .palette {
    position: relative;
    z-index: 1;
    display: flex;
    width: 224px;
    padding: 0 0 1px 2px;
    background: linear-gradient(90deg, #ece9d8 50%, #fff 50%);
  }

  .palette__bar {
    display: flex;
    flex-direction: column;
    align-items: center;
    gap: 3px;
    width: 24px;
    padding: 3px 2px 6px 0;
    background: #0851dc;
    color: #fff;
  }

  .palette__bar .upright {
    margin-top: auto;
    margin-bottom: 8px;
  }

  .palette__bar button + button {
    margin-top: 4px;
  }

  .palette__edge {
    flex: 1;
    display: flex;
    padding: 0 3px 2px 0;
    background: #66665f;
    clip-path: polygon(0 0, 100% 0, 100% calc(100% - 12px), calc(100% - 12px) 100%, 0 100%);
  }

  .palette__body {
    flex: 1;
    display: flex;
    flex-direction: column;
    padding: 13px 13px 11px 18px;
    background: #ecebe6;
    clip-path: polygon(0 0, 100% 0, 100% calc(100% - 12px), calc(100% - 12px) 100%, 0 100%);
  }

  .palette__top {
    display: flex;
    justify-content: space-between;
    margin: 0 0 10px 2px;
  }

  .palette__tools {
    display: flex;
    border: 1px solid #c3c0b2;
  }

  .palette__tools .tool {
    width: 24px;
    height: 23px;
  }

  .palette__tools .tool + .tool {
    border-left: 1px solid #c3c0b2;
  }

  .group {
    margin-bottom: 7px;
  }

  .group h2 {
    display: flex;
    align-items: center;
    justify-content: space-between;
    height: 16px;
    margin: 0;
    padding: 1px 10px 0 7px;
    border-radius: 5px 5px 0 0;
    background: #c8c4b2;
    color: #fff;
    font-size: 13px;
    line-height: 16px;
  }

  .group h2 svg {
    width: 10px;
    height: 12px;
    fill: none;
    stroke: #fff;
    stroke-width: 2;
  }

  table {
    width: 147px;
    margin-left: 16px;
    border-collapse: collapse;
    table-layout: fixed;
  }

  th,
  td {
    height: 16px;
    padding: 0 0 0 3px;
    border: 1px solid #c8c4b2;
    font-weight: normal;
    line-height: 15px;
    text-align: left;
    white-space: nowrap;
  }

  th {
    width: 57px;
  }

  td {
    padding-left: 2px;
    background: #fff;
  }

  td.readonly {
    background: #ecebe6;
  }

  .cell {
    display: flex;
    align-items: center;
    height: 15px;
  }

  .cell input {
    width: 100%;
    height: 15px;
  }

  .cell .swatch {
    margin: 0 6px 0 1px;
  }

  .cell__line {
    width: 34px;
    margin: 0 5px 0 3px;
    border-top: 1px solid #000;
  }

  .active th,
  .active td {
    border: solid #3a62a8;
    border-width: 1px 0;
  }

  .active th {
    padding-left: 1px;
    border-left: 2px solid #1d4fae;
  }

  .active td {
    border-right-width: 1px;
  }

  .active .cell span {
    flex: 1;
  }

  .tip {
    position: relative;
    z-index: 1;
    display: inline-block;
    padding: 0 3px 0 2px;
    border: 1px solid #000;
    background: #ffffe1;
    line-height: 14px;
  }

  .cell__btn {
    width: 15px;
    height: 15px;
    background: #e4e1d3;
  }

  .cell__btn .icon {
    width: 14px;
    height: 14px;
  }

  .palette__hint {
    height: 31px;
    margin: auto 0 0 1px;
    border: 1px solid #c3c0b2;
  }

  .note {
    position: absolute;
    top: 281px;
    left: 104px;
    z-index: 2;
    pointer-events: none;
    font-size: 24px;
  }

  .note path {
    fill: none;
    stroke: #f20505;
    stroke-width: 4;
    stroke-linecap: round;
  }

  /* drawing area */
  .work {
    flex: 1;
    display: flex;
    flex-direction: column;
    min-width: 0;
  }

  .work__top {
    flex: 1;
    display: flex;
    min-height: 0;
  }

  .view {
    flex: 1;
    display: flex;
    flex-direction: column;
    min-width: 0;
  }

  .view__row {
    flex: 1;
    display: flex;
    min-height: 0;
  }

  .canvas {
    flex: 1;
    min-width: 0;
    overflow: hidden;
    background: #000;
  }

  .canvas svg {
    display: block;
    fill: #00f000;
    font-size: 24px;
    font-weight: 300;
  }

  .canvas__lines {
    fill: none;
    stroke: #e020e0;
    stroke-width: 1;
  }

  .scroll {
    display: flex;
    align-items: center;
    background: #f8f7f2;
  }

  .scroll button,
  .thumb {
    flex: none;
    display: flex;
    align-items: center;
    justify-content: center;
    width: 15px;
    height: 15px;
    border: 1px solid #a9bdf0;
    border-radius: 2px;
    background: linear-gradient(135deg, #dbe6fe, #b8cbf8);
  }

  .thumb::after {
    content: '';
    width: 8px;
    height: 8px;
    background: repeating-linear-gradient(90deg, #8ca6e0 0 1px, #eef3ff 1px 2px);
  }

  .scroll--v .thumb::after {
    background: repeating-linear-gradient(#8ca6e0 0 1px, #eef3ff 1px 2px);
  }

  .scroll--v {
    flex-direction: column;
    width: 17px;
  }

  .scroll--v .before { flex: 298; }
  .scroll--v .after { flex: 220; }

  .tabs {
    display: flex;
    height: 16px;
    padding-right: 17px;
  }

  /* the tab row runs on underneath the floating palette */
  .tabs__tab {
    margin-left: -6px;
    color: #000;
    text-decoration: none;
    white-space: nowrap;
  }

  .tabs svg path {
    fill: none;
    stroke: #333;
  }

  .scroll--h {
    width: 394px;
    margin-left: auto;
    padding-left: 5px;
    border-left: 1px solid #c3c0b2;
  }

  .scroll--h .before { flex: 195; }
  .scroll--h .after { flex: 146; }

  .side {
    width: 28px;
    padding-left: 3px;
  }

  .side__bar {
    padding-bottom: 3px;
    border-bottom: 1px solid #aca899;
    border-left: 1px solid #d6d3c4;
  }

  .side__bar + .side__bar {
    padding-top: 3px;
    border-top: 1px solid #fff;
  }

  /* command window */
  .command {
    margin-top: 5px;
    padding: 10px 8px 1px 0;
    border-top: 2px solid #000;
  }

  .command__log {
    display: flex;
    justify-content: flex-end;
    height: 24px;
    border-top: 2px solid #222;
    border-bottom: 1px solid #aca899;
    background: #fff;
  }

  .command__spin button {
    display: flex;
    align-items: center;
    justify-content: center;
    width: 15px;
    height: 10px;
    border: 1px solid #a9bdf0;
    background: #cddafb;
  }

  .command__spin .chevron {
    width: 6px;
    height: 6px;
  }

  .command__line {
    display: flex;
    height: 19px;
    padding-right: 18px;
  }

  .command__line input {
    flex: 1;
    background: #fff;
  }

  .scroll--cmd {
    width: 67px;
    padding-left: 1px;
    border: 0;
  }

  /* status bar */
  .status {
    display: flex;
    align-items: center;
    height: 21px;
    padding: 1px 4px 0 5px;
    border-top: 1px solid #aca899;
    box-shadow: inset 0 1px 0 #fff;
  }

  .status__pos {
    width: 186px;
    height: 17px;
    padding-left: 1px;
    border: 1px solid #b5b19d;
    font-size: 13px;
  }

  .toggle {
    height: 17px;
    margin-left: 4px;
    padding: 0 1px;
    border: 1px solid;
    border-color: #fff #aca899 #aca899 #fff;
    line-height: 15px;
  }

  .toggle--on {
    border-color: #000 #fff #fff #000;
    background: #f5f3ea;
  }

  .toggle--narrow {
    font: 10px/15px 'Liberation Mono', monospace;
  }

  .status__label {
    margin-left: auto;
  }

  .status__scale {
    margin: 0 9px 0 11px;
  }

  .status__scale .caret {
    margin: 0 0 2px 4px;
  }

  .status__lock {
    border: 1px solid;
    border-color: #aca899 #fff #fff #aca899;
    background: #f5f3ea;
  }

  .status__lock .tool {
    height: 16px;
  }

  .status__more {
    width: 21px;
  }

  /* taskbar */
  .taskbar {
    display: flex;
    height: 30px;
    background: linear-gradient(#3c81f3 0, #245edc 4px, #2561e2 24px, #1c48b8 30px);
    color: #fff;
  }

  .start {
    display: flex;
    align-items: center;
    gap: 6px;
    width: 97px;
    padding-left: 10px;
    border-radius: 0 10px 10px 0;
    background: linear-gradient(#68b563 0, #3c9438 5px, #37933a 22px, #23702a 30px);
    box-shadow: inset -3px 0 5px #20662a;
    font-size: 18px;
    font-style: italic;
    line-height: 28px;
    text-shadow: 1px 1px 1px #1c4420;
  }

  .start .icon {
    width: 20px;
    height: 20px;
  }

  .taskbar__list {
    display: flex;
    gap: 2px;
    margin: 3px 0 2px 10px;
  }

  .task {
    display: flex;
    align-items: center;
    gap: 4px;
    width: 158px;
    padding-left: 9px;
    border-radius: 2px;
    background: linear-gradient(#5c9bff 0, #3c81f3 4px, #377bee 100%);
    white-space: nowrap;
  }

  .task--active {
    background: #1e4fb8;
    box-shadow: inset 1px 1px 2px #10307c;
  }

  .lang {
    display: flex;
    align-items: center;
    gap: 8px;
    margin-left: auto;
    padding-right: 17px;
  }

  .tray {
    display: flex;
    align-items: center;
    gap: 3px;
    width: 148px;
    padding-left: 9px;
    border-left: 1px solid #0b3fa0;
    background: linear-gradient(#3bb5f5 0, #1290e9 5px, #1196ec 24px, #0c6dc0 30px);
  }

  .tray .icon {
    width: 15px;
    height: 15px;
  }

  .tray time {
    margin-left: 8px;
  }
</style>
